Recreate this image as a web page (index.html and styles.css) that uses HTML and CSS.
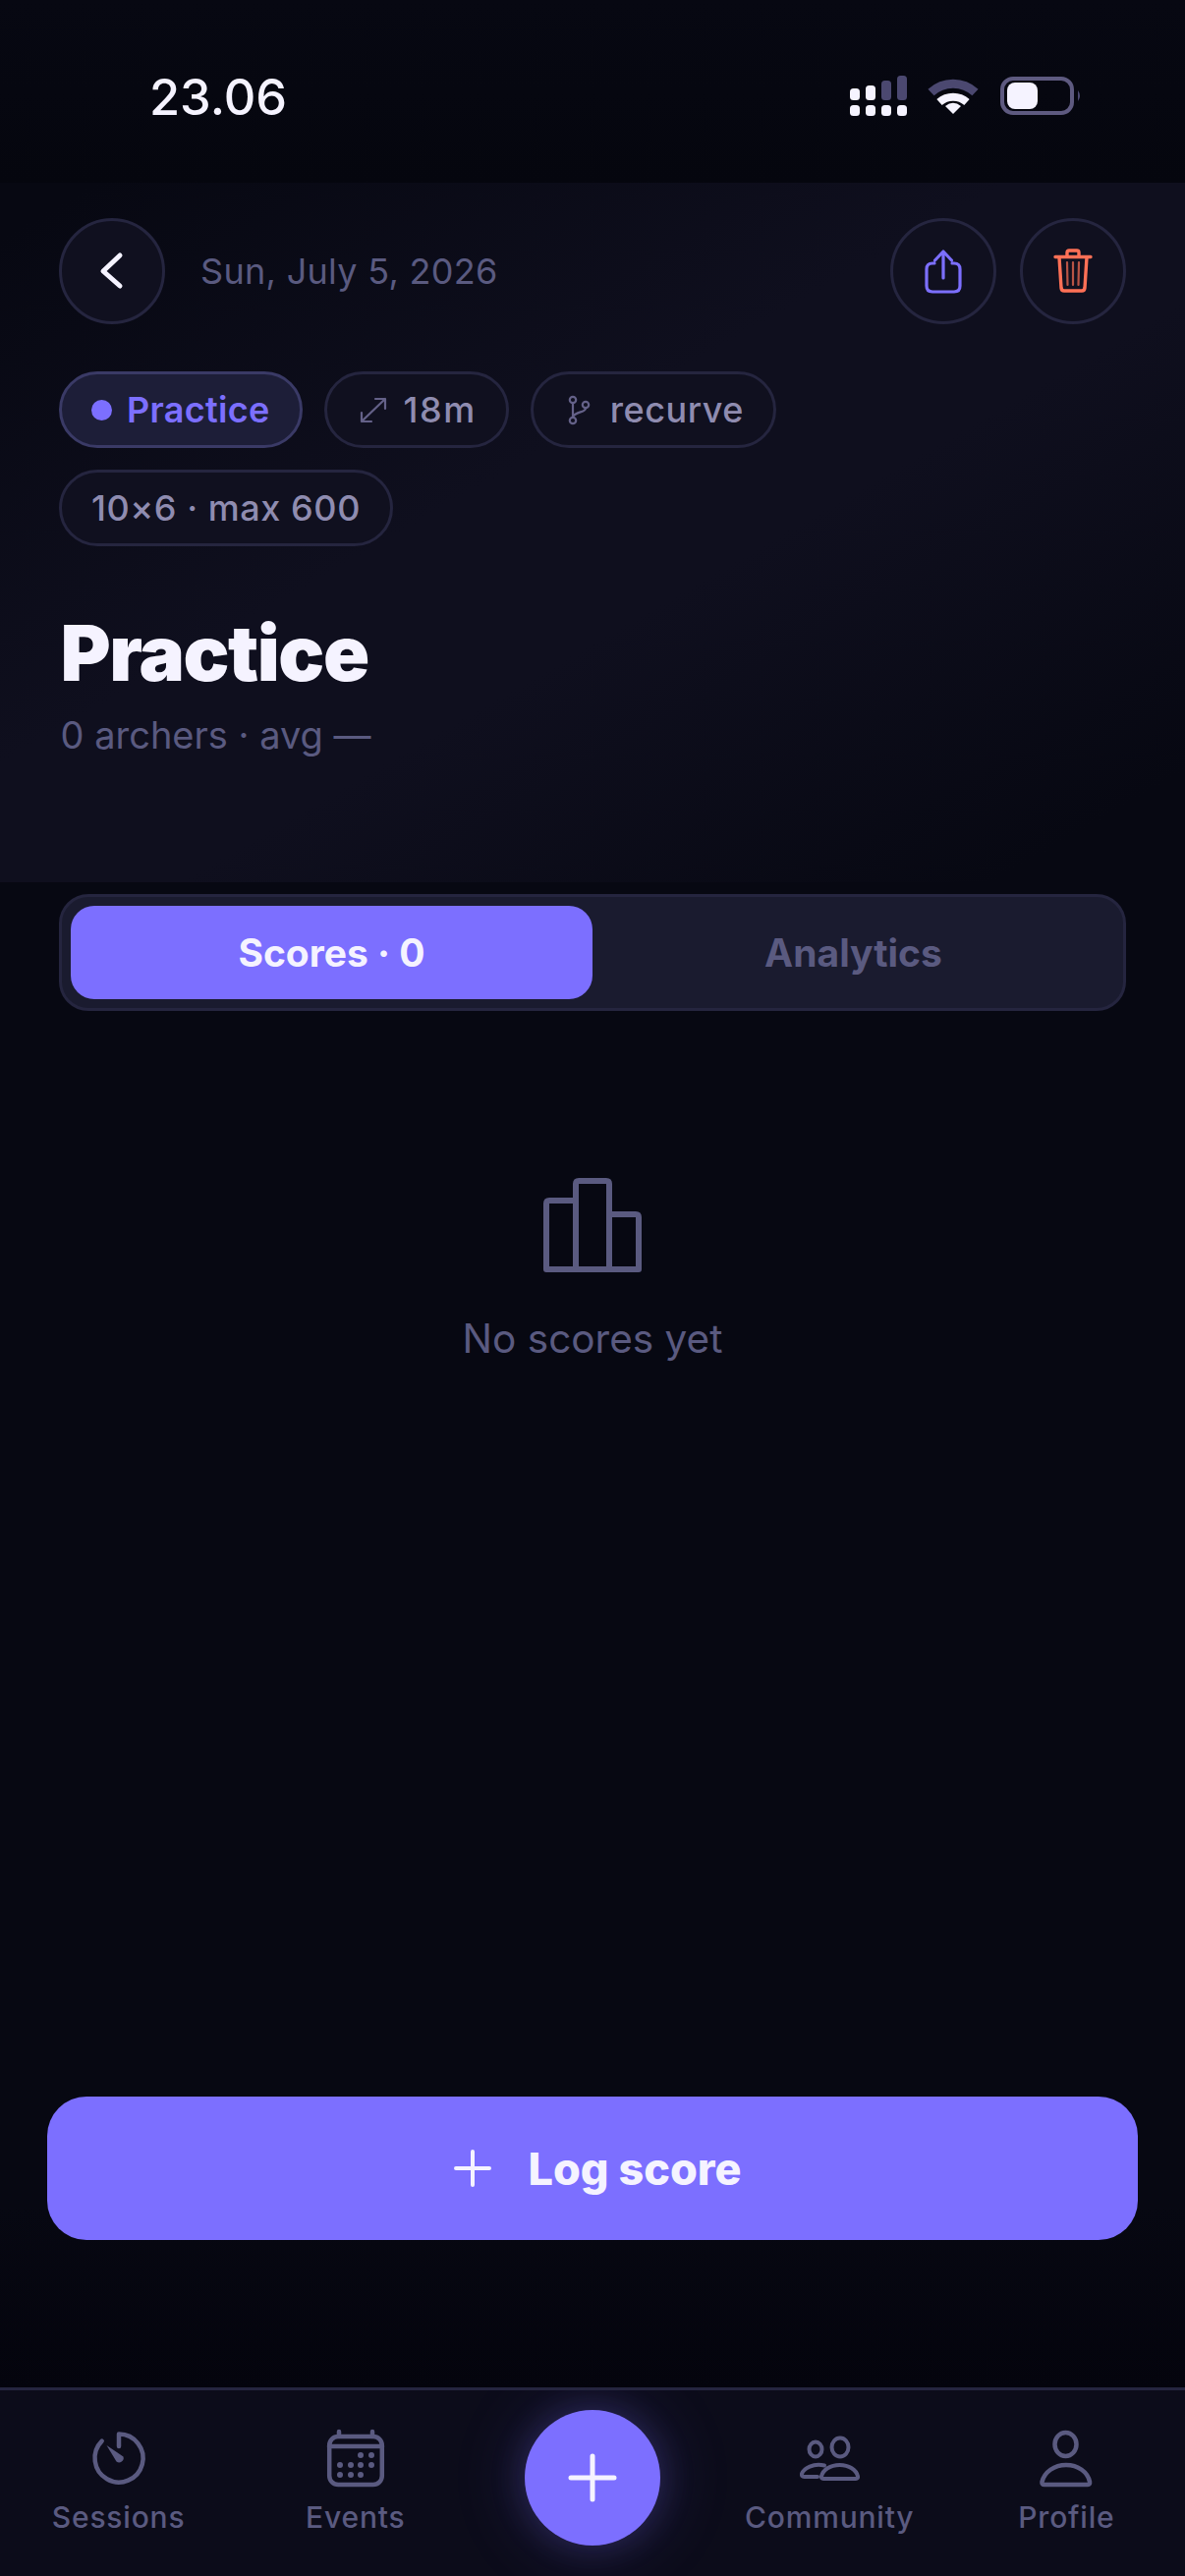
FILE: index.html
```html
<!DOCTYPE html>
<html lang="en">
<head>
<meta charset="utf-8">
<title>Practice session</title>
<link rel="stylesheet" href="styles.css">
</head>
<body>
<div class="screen">
  <header class="status">
    <span class="time">23.06</span>
    <svg class="status-icons" viewBox="0 0 240 44" aria-hidden="true">
      <g class="on">
        <rect x="0" y="14" width="10" height="12" rx="3.5"/>
        <rect x="16" y="11" width="10" height="15" rx="3.5"/>
        <rect x="0" y="31" width="10" height="11" rx="3.5"/>
        <rect x="16" y="31" width="10" height="11" rx="3.5"/>
        <rect x="32" y="31" width="10" height="11" rx="3.5"/>
        <rect x="48" y="31" width="10" height="11" rx="3.5"/>
      </g>
      <g class="dim">
        <rect x="32" y="6" width="10" height="20" rx="3.5"/>
        <rect x="48" y="1" width="10" height="25" rx="3.5"/>
      </g>
      <path class="wifi-dim" d="M82.500 18 A33 33 0 0 1 127.500 18"/>
      <path class="wifi-on" d="M91 28 A21 21 0 0 1 119 28"/>
      <path class="on" d="M105 40 L97 32 Q105 25.500 113 32 Z"/>
      <rect class="bat" x="155" y="4" width="71" height="35" rx="11"/>
      <rect class="on" x="160" y="8" width="31" height="27" rx="8"/>
      <path class="dim" d="M232 16 Q236 21.500 232 27 Z"/>
    </svg>
  </header>

  <section class="hero">
    <div class="topbar">
      <button class="round">
        <svg class="ico-36" viewBox="0 0 36 36"><path class="chev" d="M26 2 L9 18 L26 33"/></svg>
      </button>
      <span class="date">Sun, July 5, 2026</span>
      <div class="actions">
        <button class="round">
          <svg class="ico-48" viewBox="0 0 48 48"><path class="share" d="M15 16 H13 Q7 16 7 22 V39 Q7 45 13 45 H35 Q41 45 41 39 V22 Q41 16 35 16 H33 M24 31 V5 M15.500 13 L24 4 L32.500 13"/></svg>
        </button>
        <button class="round">
          <svg class="ico-48" viewBox="0 0 48 48"><path class="trash" d="M6 9.500 H42 M10 10 L12 41 Q12.300 44 15 44 H33 Q35.700 44 36 41 L38 10 M18 9 V5 Q18 3 20 3 H28 Q30 3 30 5 V9"/><path class="trash-in" d="M18 15 L18.500 38 M24 15 V38 M30 15 L29.500 38"/></svg>
        </button>
      </div>
    </div>

    <div class="chips">
      <span class="chip chip-on"><i class="dot"></i>Practice</span>
      <span class="chip chip-icon chip-dist">
        <svg class="ico-chip" viewBox="0 0 36 36"><path class="thin" d="M5 30 L29 7 M19 7 H29 V17 M5 21 V30 H15"/></svg>18m
      </span>
      <span class="chip chip-icon">
        <svg class="ico-chip" viewBox="0 0 36 36"><circle class="thin" cx="10" cy="8" r="3.200"/><circle class="thin" cx="23" cy="13" r="3.200"/><circle class="thin" cx="10" cy="29" r="3.200"/><path class="thin" d="M10 11.500 V25.500 M23 16.500 C23 21 13.500 19.500 10 25"/></svg>recurve
      </span>
      <span class="chip">10×6 · max 600</span>
    </div>

    <h1 class="title">Practice</h1>
    <p class="sub">0 archers · avg —</p>
  </section>

  <main class="main">
    <div class="tabs">
      <div class="tab tab-on">Scores · 0</div>
      <div class="tab">Analytics</div>
    </div>

    <div class="empty">
      <svg class="chart" viewBox="0 0 100 96"><path d="M33 23 H6 Q3 23 3 26 V93 H97 V40 Q97 37 94 37 H67 M33 93 V6 Q33 3 36 3 H64 Q67 3 67 6 V93"/></svg>
      <p class="empty-text">No scores yet</p>
    </div>

    <button class="log">
      <svg class="ico-plus" viewBox="0 0 38 38"><path d="M19 2 V36 M2 19 H36"/></svg>
      <span>Log score</span>
    </button>
  </main>

  <nav class="nav">
    <div class="nav-item">
      <svg class="nav-ico" viewBox="0 0 60 60">
        <path class="ns" d="M12.700 12.700 A24.500 24.500 0 1 0 30 5.500 V18"/>
        <path class="nf" d="M17.500 17 L34.500 28.500 A4.500 4.500 0 0 1 27.500 33.500 Z"/>
      </svg>
      <span>Sessions</span>
    </div>
    <div class="nav-item">
      <svg class="nav-ico" viewBox="0 0 60 60">
        <rect class="ns" x="3.200" y="8" width="53.600" height="49" rx="9"/>
        <path class="ns" d="M3 18 H57 M13 3 V8 M47 3 V8"/>
        <g class="nf">
          <circle cx="35" cy="27" r="3"/><circle cx="46" cy="27" r="3"/>
          <circle cx="14" cy="37" r="3"/><circle cx="25" cy="37" r="3"/><circle cx="35" cy="37" r="3"/><circle cx="46" cy="37" r="3"/>
          <circle cx="14" cy="47" r="3"/><circle cx="25" cy="47" r="3"/><circle cx="35" cy="47" r="3"/>
        </g>
      </svg>
      <span>Events</span>
    </div>
    <div class="nav-item nav-fab">
      <button class="fab">
        <svg class="ico-plus-lg" viewBox="0 0 60 60"><path d="M30 8 V52 M8 30 H52"/></svg>
      </button>
    </div>
    <div class="nav-item">
      <svg class="nav-ico" viewBox="0 0 60 60">
        <ellipse class="ns-t" cx="41" cy="19" rx="8.500" ry="9.500"/>
        <ellipse class="ns-t" cx="16" cy="21" rx="6.500" ry="7.500"/>
        <path class="ns-t" d="M24 51 H57 Q59.500 51 59 48.500 C57.500 42 50 37 40.500 37 C31 37 23.500 42 22 48.500 Q21.500 51 24 51 Z"/>
        <path class="ns-t" d="M25 37.500 C14 35 4 40 2 46 Q1.500 49 4.500 49 H18"/>
      </svg>
      <span>Community</span>
    </div>
    <div class="nav-item">
      <svg class="nav-ico" viewBox="0 0 60 60">
        <ellipse class="ns" cx="29.500" cy="16" rx="11" ry="12"/>
        <path class="ns" d="M8 57 H52 Q54.500 57 54 54 C52 44 42 37 30 37 C18 37 8 44 5.500 54 Q5 57 8 57 Z"/>
      </svg>
      <span>Profile</span>
    </div>
  </nav>
</div>
</body>
</html>
```
FILE: styles.css
```css
* { box-sizing: border-box; }
html, body { margin: 0; padding: 0; background: #070812; }
body { font-family: Inter, "Noto Sans", sans-serif; color: #f5f3ff; }
button { font-family: inherit; padding: 0; border: 0; background: none; color: inherit; }
h1, p { margin: 0; }
svg { display: block; flex: none; overflow: visible; }

.screen { width: 1206px; height: 2622px; display: flex; flex-direction: column; overflow: hidden; background: #070812; }

/* status bar */
.status { height: 186px; flex: none; display: flex; justify-content: space-between; align-items: flex-start; padding: 74px 104px 0 152px; background: linear-gradient(#070812, #05060e); }
.time { font-size: 50.500px; line-height: 50px; font-weight: 500; color: #f5f3ff; }
.status-icons { width: 240px; height: 44px; margin-top: 2px; margin-right: -3px; }
.on { fill: #f5f3ff; }
.dim { fill: #4b4870; }
.wifi-dim { fill: none; stroke: #4b4870; stroke-width: 9; }
.wifi-on { fill: none; stroke: #f5f3ff; stroke-width: 8; }
.bat { fill: none; stroke: #5e5a80; stroke-width: 4; }

/* hero */
.hero { height: 712px; flex: none; padding: 36px 60px 0; background: linear-gradient(150deg, #070812 4%, #0f0f1e 42%, #0f0f1e 58%, #070812 92%); }
.topbar { display: flex; align-items: center; height: 108px; }
.round { width: 108px; height: 108px; border-radius: 50%; border: 3px solid #25253f; background: #10101f; display: flex; align-items: center; justify-content: center; flex: none; }
.date { margin-left: 36px; font-size: 36px; letter-spacing: 0.3px; color: #5a5a80; }
.actions { margin-left: auto; display: flex; gap: 24px; }
.ico-36 { width: 36px; height: 36px; }
.ico-48 { width: 48px; height: 48px; }
.chev { fill: none; stroke: #f5f3ff; stroke-width: 5; stroke-linecap: round; stroke-linejoin: round; }
.share { fill: none; stroke: #7c6fff; stroke-width: 3.200; stroke-linecap: round; stroke-linejoin: round; }
.trash { fill: none; stroke: #ff7056; stroke-width: 3.400; stroke-linecap: round; stroke-linejoin: round; }
.trash-in { fill: none; stroke: #ff7056; stroke-width: 2.200; stroke-linecap: round; opacity: .7; }

.chips { display: flex; flex-wrap: wrap; gap: 22px; margin-top: 48px; padding-right: 12px; }
.chip { height: 78px; display: inline-flex; align-items: center; gap: 15px; padding: 0 30px; border: 3px solid #25253f; border-radius: 39px; background: #10101f; font-size: 36px; font-weight: 500; letter-spacing: 0.55px; color: #8f8cb0; white-space: nowrap; }
.chip-on { background: #1d1e38; border-color: #3a3a66; color: #7c6fff; font-weight: 600; letter-spacing: 0.3px; }
.chip-icon { gap: 12px; }
.chip-dist { letter-spacing: 1.500px; }
.dot { width: 21px; height: 21px; border-radius: 50%; background: #7c6fff; flex: none; }
.ico-chip { width: 36px; height: 36px; }
.thin { fill: none; stroke: #646188; stroke-width: 2.200; stroke-linecap: round; stroke-linejoin: round; }

.title { margin-top: 62px; margin-left: 1.500px; font-size: 78px; line-height: 94px; font-weight: 900; letter-spacing: -1.500px; color: #f5f3ff; }
.sub { margin-top: 12px; margin-left: 1.500px; font-size: 38px; line-height: 48px; color: #5a5a80; }

/* main */
.main { flex: 1; display: flex; flex-direction: column; padding: 12px 60px 150px; background: linear-gradient(#070812 88%, #04040d 100%); }
.tabs { display: flex; height: 119px; padding: 9px; border: 3px solid #25253f; border-radius: 30px; background: #1a1b2f; }
.tab { flex: 1; display: flex; align-items: center; justify-content: center; border-radius: 24px; font-size: 39px; font-weight: 700; color: #5a5a80; }
.tab-on { background: #7c6fff; color: #f5f3ff; }

.empty { display: flex; flex-direction: column; align-items: center; margin-top: 170px; }
.chart { width: 100px; height: 96px; }
.chart path { fill: none; stroke: #5a5a80; stroke-width: 6; stroke-linejoin: round; }
.empty-text { margin-top: 44px; font-size: 40.500px; line-height: 48px; color: #5a5a80; }

.log { margin: auto -12px 0; height: 146px; padding-left: 11px; border-radius: 40px; background: #7c6fff; display: flex; align-items: center; justify-content: center; gap: 37px; font-size: 45px; font-weight: 800; color: #f5f3ff; }
.ico-plus { width: 38px; height: 38px; }
.ico-plus path { fill: none; stroke: #f5f3ff; stroke-width: 4; stroke-linecap: round; }

/* bottom nav */
.nav { height: 192px; flex: none; display: grid; grid-template-columns: repeat(5, 1fr); padding-top: 39px; border-top: 3px solid #25253f; background: #0c0c1a; overflow: hidden; }
.nav-item { display: flex; flex-direction: column; align-items: center; font-size: 30px; line-height: 36px; font-weight: 500; letter-spacing: 0.8px; color: #5a5a80; }
.nav-ico { width: 60px; height: 60px; margin-bottom: 12px; }
.ns, .ns-t { fill: none; stroke: #5a5a80; stroke-width: 4.500; stroke-linecap: round; stroke-linejoin: round; }
.ns-t { stroke-width: 4; }
.nf { fill: #5a5a80; }
.nav-fab { margin-top: -19px; }
.fab { width: 138px; height: 138px; border-radius: 50%; background: #7c6fff; display: flex; align-items: center; justify-content: center; box-shadow: 0 0 30px 6px rgba(124, 111, 255, .18), 0 0 60px 24px rgba(124, 111, 255, .08); }
.ico-plus-lg { width: 60px; height: 60px; }
.ico-plus-lg path { fill: none; stroke: #f5f3ff; stroke-width: 5; stroke-linecap: round; }
```
